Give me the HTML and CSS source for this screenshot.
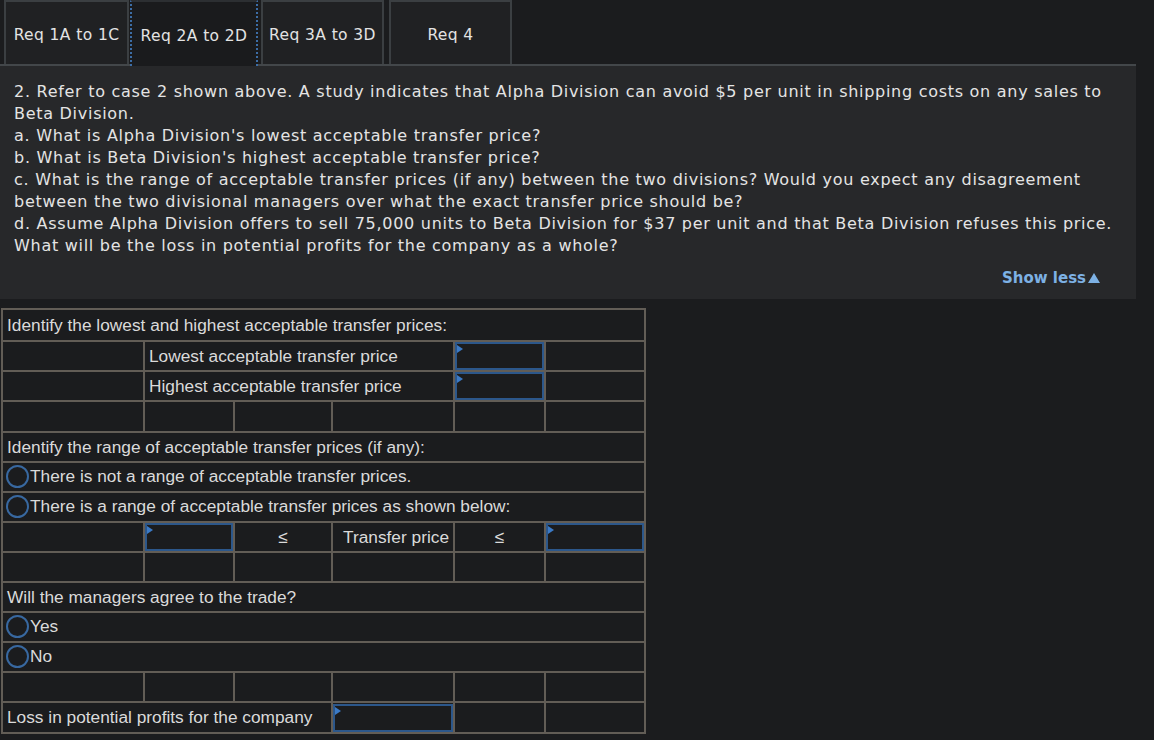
FILE: index.html
```html
<!DOCTYPE html>
<html>
<head>
<meta charset="utf-8">
<link rel="stylesheet" href="styles.css">
</head>
<body>
<div class="tabs">
  <div class="tab t1">Req 1A to 1C</div>
  <div class="tab t2 active">Req 2A to 2D</div>
  <div class="tab t3">Req 3A to 3D</div>
  <div class="tab t4">Req 4</div>
</div>
<div class="panel">
  <p class="question">2. Refer to case 2 shown above. A study indicates that Alpha Division can avoid $5 per unit in shipping costs on any sales to<br>Beta Division.<br>a. What is Alpha Division's lowest acceptable transfer price?<br>b. What is Beta Division's highest acceptable transfer price?<br>c. What is the range of acceptable transfer prices (if any) between the two divisions? Would you expect any disagreement<br>between the two divisional managers over what the exact transfer price should be?<br>d. Assume Alpha Division offers to sell 75,000 units to Beta Division for $37 per unit and that Beta Division refuses this price.<br>What will be the loss in potential profits for the company as a whole?</p>
  <div class="showless">Show less<span class="tri"></span></div>
</div>
<table class="grid">
  <colgroup>
    <col class="c1"><col class="c2"><col class="c3"><col class="c4"><col class="c5"><col class="c6">
  </colgroup>
  <tr class="tall"><td colspan="6">Identify the lowest and highest acceptable transfer prices:</td></tr>
  <tr><td></td><td colspan="3">Lowest acceptable transfer price</td><td class="in"><div class="box"></div></td><td></td></tr>
  <tr><td></td><td colspan="3">Highest acceptable transfer price</td><td class="in"><div class="box"></div></td><td></td></tr>
  <tr class="mid"><td></td><td></td><td></td><td></td><td></td><td></td></tr>
  <tr><td colspan="6">Identify the range of acceptable transfer prices (if any):</td></tr>
  <tr><td colspan="6" class="radio-cell"><span class="radio"></span>There is not a range of acceptable transfer prices.</td></tr>
  <tr><td colspan="6" class="radio-cell"><span class="radio"></span>There is a range of acceptable transfer prices as shown below:</td></tr>
  <tr><td></td><td class="in"><div class="box"></div></td><td class="ctr">≤</td><td class="rt">Transfer price</td><td class="ctr">≤</td><td class="in"><div class="box"></div></td></tr>
  <tr><td></td><td></td><td></td><td></td><td></td><td></td></tr>
  <tr><td colspan="6">Will the managers agree to the trade?</td></tr>
  <tr><td colspan="6" class="radio-cell"><span class="radio"></span>Yes</td></tr>
  <tr><td colspan="6" class="radio-cell"><span class="radio"></span>No</td></tr>
  <tr><td></td><td></td><td></td><td></td><td></td><td></td></tr>
  <tr class="mid"><td colspan="3">Loss in potential profits for the company</td><td class="in"><div class="box"></div></td><td></td><td></td></tr>
</table>
</body>
</html>
```
FILE: styles.css
```css
html, body {
  margin: 0;
  padding: 0;
  background: #1b1c1e;
}
body {
  width: 1154px;
  height: 740px;
  overflow: hidden;
  font-family: "DejaVu Sans", Verdana, sans-serif;
}
.tabs {
  display: flex;
  height: 64px;
  padding-left: 4px;
}
.tab {
  box-sizing: border-box;
  height: 64px;
  border: 2px solid #3b3f42;
  border-bottom: none;
  background: #202123;
  color: #e3e3e3;
  font-size: 15.5px;
  letter-spacing: 0.4px;
  display: flex;
  align-items: center;
  justify-content: center;
  padding-top: 4px;
}
.t1 { width: 125px; }
.t2 { width: 128px; margin-left: 1px; }
.t3 { width: 123px; margin-left: 3px; }
.t4 { width: 123px; margin-left: 5px; }
.tab.active {
  background: #1a1b1d;
  border-left: 2px dotted #3c6da6;
  border-right: 2px dotted #3c6da6;
  border-top: 2px solid #2c2f32;
  height: 66px;
  margin-bottom: -2px;
  position: relative;
  z-index: 1;
}
.panel {
  width: 1136px;
  box-sizing: border-box;
  background: #27282a;
  border-top: 2px solid #43474a;
  padding: 15px 36px 10px 14px;
}
.question {
  margin: 0;
  color: #e4e4e4;
  font-size: 16px;
  line-height: 22px;
  letter-spacing: 0.72px;
  white-space: nowrap;
}
.showless {
  margin-top: 10px;
  text-align: right;
  color: #7db1e4;
  font-weight: bold;
  font-size: 15px;
  line-height: 22px;
}
.tri {
  display: inline-block;
  width: 0;
  height: 0;
  margin-left: 2px;
  border-left: 6px solid transparent;
  border-right: 6px solid transparent;
  border-bottom: 10px solid #7db1e4;
  vertical-align: 0;
}
.grid {
  margin: 9px 0 0 1px;
  border-collapse: collapse;
  table-layout: fixed;
  width: 645px;
  font-family: "Liberation Sans", Arial, sans-serif;
  font-size: 17.3px;
  color: #dadada;
}
.c1 { width: 142px; }
.c2 { width: 90px; }
.c3 { width: 98px; }
.c4 { width: 122px; }
.c5 { width: 91px; }
.c6 { width: 100px; }
.grid tr {
  height: 30px;
}
.grid tr.tall {
  height: 32px;
}
.grid tr.mid {
  height: 31px;
}
.grid td {
  border: 2px solid #625d56;
  padding: 0 4px;
  white-space: nowrap;
  overflow: visible;
}
.grid td.in {
  padding: 0;
}
.grid td.ctr {
  text-align: center;
}
.grid td.rt {
  text-align: right;
}
.grid td.radio-cell {
  padding-left: 3px;
}
.box {
  box-sizing: border-box;
  height: 28px;
  width: 100%;
  border: 2px solid #2c578b;
  position: relative;
}
.box::before {
  content: "";
  position: absolute;
  left: 0;
  top: 1px;
  border-left: 6px solid #3b7ac6;
  border-top: 4px solid transparent;
  border-bottom: 4px solid transparent;
}
.radio {
  display: inline-block;
  box-sizing: border-box;
  width: 23px;
  height: 23px;
  border: 2px solid #3868a0;
  border-radius: 50%;
  vertical-align: middle;
  margin-right: 1px;
  position: relative;
  top: -1px;
}
```
